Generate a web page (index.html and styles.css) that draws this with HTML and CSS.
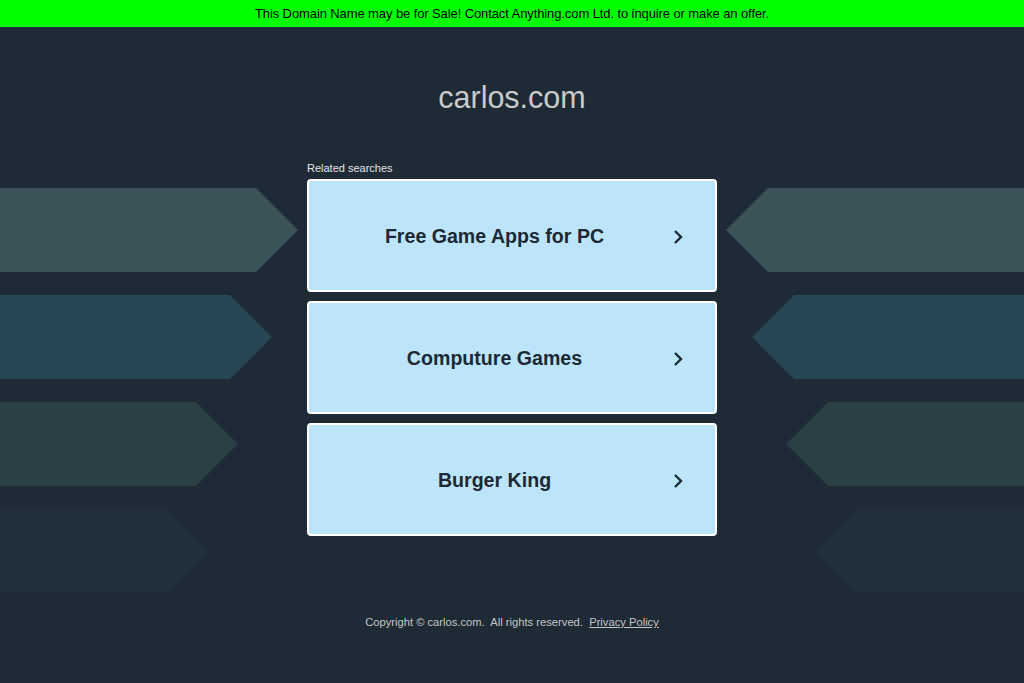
FILE: index.html
```html
<!DOCTYPE html>
<html lang="en">
<head>
    <meta charset="UTF-8">
    <meta name="viewport" content="width=device-width, initial-scale=1.0">
    <title>carlos.com</title>
    <link rel="stylesheet" href="styles.css">
</head>
<body>
    <div class="sale-bar">This Domain Name may be for Sale! Contact Anything.com Ltd. to inquire or make an offer.</div>

    <div class="layout">
        <div class="arrows arrows-left">
            <div class="arrow arrow-1"></div>
            <div class="arrow arrow-2"></div>
            <div class="arrow arrow-3"></div>
            <div class="arrow arrow-4"></div>
        </div>

        <div class="content">
            <h1 class="domain">carlos.com</h1>
            <div class="related-label">Related searches</div>

            <a class="search-link" href="#">
                <span class="search-text">Free Game Apps for PC</span>
                <svg class="chevron" viewBox="0 0 10 16"><path d="M2 2 L8 8 L2 14"/></svg>
            </a>
            <a class="search-link" href="#">
                <span class="search-text">Computure Games</span>
                <svg class="chevron" viewBox="0 0 10 16"><path d="M2 2 L8 8 L2 14"/></svg>
            </a>
            <a class="search-link" href="#">
                <span class="search-text">Burger King</span>
                <svg class="chevron" viewBox="0 0 10 16"><path d="M2 2 L8 8 L2 14"/></svg>
            </a>
        </div>

        <div class="arrows arrows-right">
            <div class="arrow arrow-1"></div>
            <div class="arrow arrow-2"></div>
            <div class="arrow arrow-3"></div>
            <div class="arrow arrow-4"></div>
        </div>
    </div>

    <div class="footer">
        Copyright &copy; carlos.com.&nbsp; All rights reserved.&nbsp; <a href="#">Privacy Policy</a>
    </div>
</body>
</html>
```

FILE: styles.css
```css
body {
    margin: 0;
    background-color: #1e2a35;
    font-family: "Liberation Sans", Arial, sans-serif;
    overflow: hidden;
}

.sale-bar {
    height: 27px;
    line-height: 28px;
    background-color: #00ff00;
    color: #000;
    font-size: 13px;
    letter-spacing: -0.1px;
    text-align: center;
}

.layout {
    display: grid;
    grid-template-columns: 307px 410px 1fr;
}

/* decorative arrows on both sides */
.arrows {
    display: flex;
    flex-direction: column;
    gap: 23px;
    padding-top: 161px;
}

.arrows-right {
    align-items: flex-end;
}

.arrow {
    height: 84px;
}

.arrows-left .arrow {
    clip-path: polygon(0 0, calc(100% - 42px) 0, 100% 50%, calc(100% - 42px) 100%, 0 100%);
}

.arrows-right .arrow {
    clip-path: polygon(42px 0, 100% 0, 100% 100%, 42px 100%, 0 50%);
}

.arrow-1 {
    width: 298px;
    background-color: #3b5358;
}

.arrow-2 {
    width: 272px;
    background-color: #274654;
}

.arrow-3 {
    width: 238px;
    background-color: #2b3f47;
}

.arrow-4 {
    width: 209px;
    background-color: #212f3a;
}

.content {
    display: flex;
    flex-direction: column;
}

.domain {
    margin: 52px 0 0;
    font-size: 30.5px;
    font-weight: normal;
    line-height: 36px;
    color: #cacaca;
    text-align: center;
}

.related-label {
    margin: 46px 0 4px;
    font-size: 11px;
    line-height: 14px;
    color: #e6e6e6;
}

.search-link {
    display: flex;
    align-items: center;
    box-sizing: border-box;
    height: 113px;
    margin-bottom: 9px;
    padding: 2px 32px 0 7px;
    background-color: #bce5fb;
    border: 2px solid #fff;
    border-radius: 4px;
    text-decoration: none;
}

.search-text {
    flex: 1;
    text-align: center;
    font-size: 19.6px;
    font-weight: bold;
    color: #1c2934;
}

.chevron {
    width: 10px;
    height: 16px;
    fill: none;
    stroke: #1c2934;
    stroke-width: 2.4;
}

.footer {
    margin-top: 22px;
    font-size: 11.2px;
    line-height: 14px;
    color: #c6c6c6;
    text-align: center;
}

.footer a {
    color: #c6c6c6;
}
```
